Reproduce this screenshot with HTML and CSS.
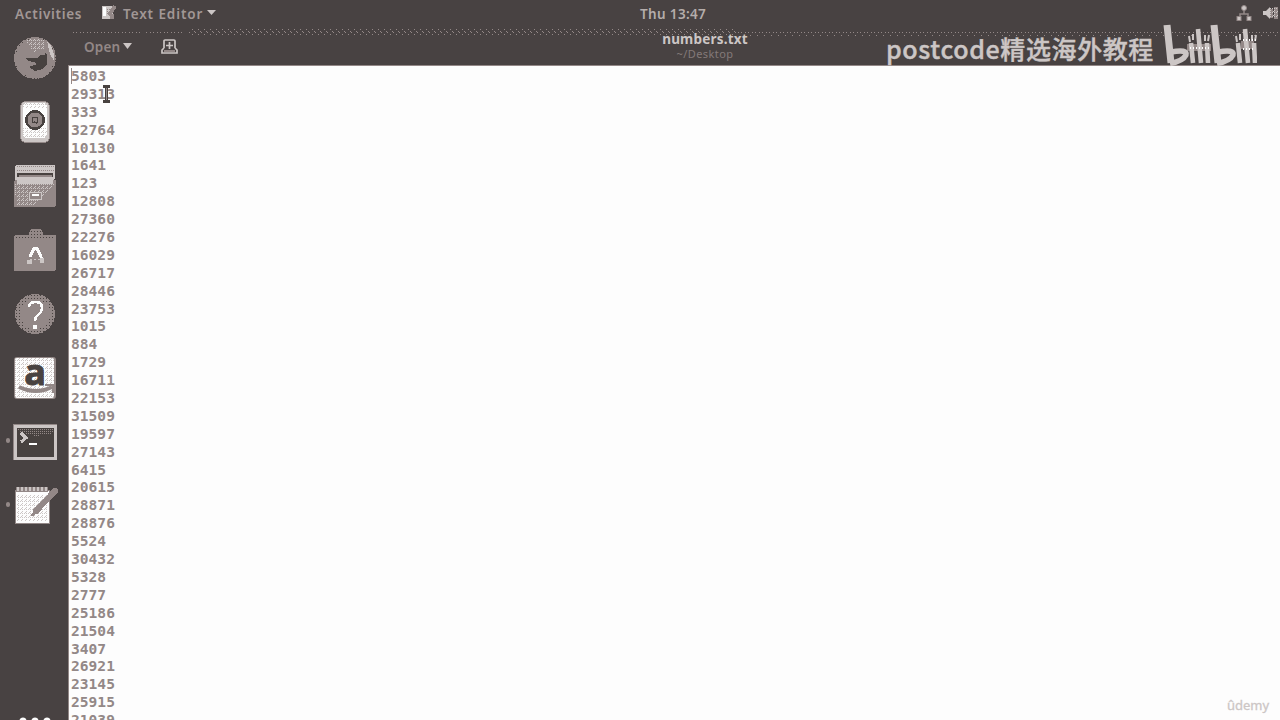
FILE: index.html
```html
<!DOCTYPE html>
<html lang="en">
<head>
<meta charset="utf-8">
<title>numbers.txt</title>
<link rel="stylesheet" href="styles.css">
</head>
<body>
<svg class="defs" width="0" height="0" aria-hidden="true">
  <defs>
    <pattern id="dk" width="3" height="3" patternUnits="userSpaceOnUse"><rect width="1" height="1" fill="#484240"/></pattern>
    <pattern id="mid" width="2" height="2" patternUnits="userSpaceOnUse"><rect width="1" height="1" fill="#938887"/></pattern>
    <pattern id="lt" width="4" height="4" patternUnits="userSpaceOnUse"><path d="M0 0h1v1h-1zM2 2h1v1h-1zM2 0h1v1h-1zM1 3h1v1h-1z" fill="#ccc6c5"/></pattern>
    <pattern id="grain" width="6" height="5" patternUnits="userSpaceOnUse"><path d="M0 0h1v1h-1zM3 2h1v1h-1zM5 4h1v1h-1z" fill="#938887"/></pattern>
    <pattern id="dots" width="7" height="5" patternUnits="userSpaceOnUse"><path d="M0 0h1v1h-1zM4 0h1v1h-1zM2 3h1v1h-1z" fill="#938887"/></pattern>
  </defs>
</svg>
<div class="screen">
  <header class="topbar">
    <span class="activities">Activities</span>
    <svg class="appicon" width="16" height="16" shape-rendering="crispEdges"><path d="M1 1h11v13H1z" fill="#ccc6c5"/><path d="M2 2h3v9H2z" fill="#fdfdfd"/><path d="M5 3h7v9H7z" fill="url(#mid)"/><path d="M14 1L8 10" stroke="#938887" stroke-width="4"/><path d="M9 9h4v5H9z" fill="#938887"/></svg>
    <span class="appname">Text Editor</span>
    <svg class="tri" width="9" height="6"><path d="M0 0h9L4.500 5z" fill="#ccc6c5"/></svg>
    <span class="clock">Thu 13:47</span>
    <svg class="tray" width="44" height="18"><g fill="#ccc6c5" stroke="#938887"><path d="M8 6v4M4 13v-3h8v3" fill="none" stroke-width="1.500"/><circle cx="8" cy="4" r="2.500"/><rect x="1" y="12.500" width="4" height="4"/><rect x="11" y="12.500" width="4" height="4"/></g><path d="M27 7h3l4-4v12l-4-4h-3z" fill="#ccc6c5"/><path d="M34 5h3v9h-3zM38 3h4v12h-4z" fill="#938887"/><path d="M34 4h8v10h-8z" fill="url(#lt)"/></svg>
  </header>
  <div class="main">
    <nav class="dock">
      <div class="item"><svg width="44" height="44" shape-rendering="crispEdges"><circle cx="22" cy="22" r="21" fill="#938887"/><circle cx="22" cy="22" r="20.500" fill="none" stroke="url(#dk)" stroke-width="2"/><path d="M13 5Q22 0 33 5L31 13L21 16Z" fill="url(#lt)"/><path d="M34 5Q42 13 41 25L37 18Z" fill="#ccc6c5"/><path d="M13 22h11l3-3h5l1-4 1 5v8l-4 5-8 2-6-4 8-3-3-2-6-1z" fill="#484240"/></svg></div>
      <div class="item"><svg width="44" height="44" shape-rendering="crispEdges"><rect x="7" y="1" width="30" height="42" rx="6" fill="#938887"/><rect x="8" y="2" width="28" height="40" rx="5" fill="#ccc6c5"/><rect x="10" y="3" width="24" height="35" rx="4" fill="#fdfdfd"/><path d="M10 28h24v11H10z" fill="url(#lt)"/><rect x="10" y="2" width="24" height="6" fill="url(#lt)"/><circle cx="22" cy="20" r="10" fill="#484240"/><circle cx="22" cy="20" r="7.500" fill="#938887"/><circle cx="22" cy="20" r="3" fill="#938887" stroke="#484240"/><path d="M21 21l3 3" stroke="#484240"/></svg></div>
      <div class="item"><svg width="44" height="44" shape-rendering="crispEdges"><rect x="2" y="1" width="40" height="15" rx="2" fill="#ccc6c5"/><path d="M3 1h38v2H3zM3 5h38v3H3z" fill="url(#mid)"/><rect x="4" y="9" width="36" height="6" fill="#484240"/><path d="M6 11h33v2H6z" fill="#938887"/><rect x="1" y="16" width="42" height="27" rx="2" fill="#938887"/><path d="M4 13h36v7H4z" fill="#ccc6c5"/><path d="M2 20h39L20 42H3z" fill="url(#lt)"/><path d="M16 28h12v7H16z" fill="#938887" stroke="#ccc6c5"/><path d="M19 31h7" stroke="#fdfdfd" stroke-width="2"/></svg></div>
      <div class="item"><svg width="44" height="44" shape-rendering="crispEdges"><path d="M16 7q0-6 4-6h6q4 0 4 6z" fill="#938887"/><path d="M18 3h11v4H18z" fill="url(#dk)"/><rect x="1" y="7" width="42" height="36" rx="2" fill="#938887"/><path d="M2 7h40v3H2z" fill="url(#dk)"/><path d="M17 29l4-9h3l5 11" fill="none" stroke="#fdfdfd" stroke-width="3"/><path d="M17 31h12" stroke="#ccc6c5" stroke-dasharray="2 2"/><path d="M14 32h5v4h-5zM27 30h4v5h-4z" fill="#ccc6c5"/></svg></div>
      <div class="item"><svg width="44" height="44" shape-rendering="crispEdges"><circle cx="22" cy="22" r="20" fill="#938887"/><circle cx="22" cy="22" r="17.500" fill="none" stroke="url(#dk)" stroke-width="5"/><path d="M16 15q0-5 7-5 6 0 6 6 0 4-4 7-3 2-3 6" fill="none" stroke="#fdfdfd" stroke-width="2.600"/><circle cx="22" cy="35" r="2.300" fill="#fdfdfd"/></svg></div>
      <div class="item amazon"><svg width="44" height="44"><rect x="1" y="1" width="42" height="42" rx="3" fill="#938887"/><rect x="2" y="2" width="39" height="40" rx="2" fill="#fdfdfd"/><path d="M2 2h39v40H2z" fill="url(#lt)"/><text x="22" y="28.500" text-anchor="middle" class="glyph">a</text><path d="M6 31q17 8 33 0" fill="none" stroke="#938887" stroke-width="4"/><path d="M32 29h8v8" fill="none" stroke="#938887" stroke-width="2"/></svg></div>
      <div class="item running term"><svg width="46" height="38" shape-rendering="crispEdges"><rect x="1" y="1" width="44" height="36" fill="#938887"/><rect x="3" y="3" width="40" height="32" fill="#484240" stroke="#ccc6c5" stroke-width="3"/><path d="M5 5h37v5L24 13 8 9z" fill="url(#mid)"/><path d="M9 10l5 5-5 4" fill="none" stroke="#ccc6c5" stroke-width="3"/><path d="M17 21h8" stroke="#fdfdfd" stroke-width="1.500"/></svg></div>
      <div class="item running notes"><svg width="46" height="40" shape-rendering="crispEdges"><path d="M3 5h34v33H3z" fill="#fdfdfd" stroke="#938887"/><path d="M5 9h30v27H5z" fill="url(#lt)"/><path d="M4 2h32v5H4z" fill="#938887"/><path d="M5 4h31" stroke="#ccc6c5" stroke-width="4" stroke-dasharray="2 2"/><path d="M43 6L24 26" stroke="#938887" stroke-width="6" stroke-linecap="round"/><path d="M25 24l-5 7" stroke="#938887" stroke-width="3"/></svg></div>
      <svg class="apps" width="34" height="10"><circle cx="5" cy="5" r="3.500" fill="#fdfdfd"/><circle cx="17" cy="5" r="3.500" fill="#fdfdfd"/><circle cx="29" cy="5" r="3.500" fill="#fdfdfd"/></svg>
    </nav>
    <section class="window">
      <div class="titlebar">
        <svg class="speckle" width="1210" height="9" shape-rendering="crispEdges"><path d="M2 5h70v2H2zM76 5h38v2H76z" fill="url(#dots)"/><path d="M120 2h549v7H120z" fill="url(#grain)"/><path d="M669 4h541v5H669z" fill="url(#dots)"/></svg>
        <span class="open">Open</span>
        <svg class="tri opentri" width="9" height="6"><path d="M0 0h9L4.500 6z" fill="#ccc6c5"/></svg>
        <svg class="newtab" width="18" height="16"><path d="M3 9V2q0-1 1-1h9q1 0 1 1v7M3 9l-2 2v3h15v-3l-2-2M8.500 3v7M5 6.500h7" fill="none" stroke="#ccc6c5" stroke-width="1.700"/><path d="M3 12h11" stroke="#938887" stroke-width="2"/></svg>
        <div class="title"><b>numbers.txt</b><span>~/Desktop</span></div>
      </div>
      <pre class="editor">5803
29313
333
32764
10130
1641
123
12808
27360
22276
16029
26717
28446
23753
1015
884
1729
16711
22153
31509
19597
27143
6415
20615
28871
28876
5524
30432
5328
2777
25186
21504
3407
26921
23145
25915
21039</pre>
    </section>
  </div>
  <i class="caret"></i>
  <svg class="cursor" width="9" height="18"><path d="M1 1.500h7M4.500 2v14M1 16.500h7" fill="none" stroke="#484240" stroke-width="3"/><path d="M4.500 3v12" stroke="#938887"/></svg>
  <div class="watermark"><span>postcode精选海外教程</span></div>
  <svg class="brand" width="96" height="46" viewBox="0 0 96 46" role="img" aria-label="bilibili">
    <path d="M26 21h24v7H26zM80 18h13v8H80z" fill="#938887"/>
    <g fill="none" stroke="#ccc6c5" stroke-width="7">
      <path d="M6 2l4 38M53 2l4 38"/>
      <path d="M10 29q17-3 15 3-3 6-16 8.500M57 29q17-3 15 3-3 6-16 8.500" stroke-width="5.500"/>
    </g>
    <g stroke="#ccc6c5" stroke-width="4.600"><path d="M30 20l2 20M37 6l3 34M46 20l1 20M77 20l2 20M84 6l3 34M93 20l1 20"/></g>
    <g stroke="#ccc6c5" stroke-width="2"><path d="M28 13l1 6M32 11v6M44 12v6M48 12l-1 6M75 13l1 6M79 11v6M91 12v6M95 12l-1 6"/></g>
    <path d="M29 25h20M82 17h13M82 26h12" stroke="#fdfdfd" stroke-width="2" stroke-dasharray="1 2"/>
  </svg>
  <span class="udemy">ûdemy</span>
</div>
</body>
</html>
```
FILE: styles.css
```css
body { margin: 0; }
.defs { position: absolute; }
.screen { position: relative; width: 1280px; height: 720px; overflow: hidden; display: flex; flex-direction: column; background: #484242; color: #938887; font-family: "Noto Sans", "Noto Sans CJK SC", sans-serif; }
.topbar { height: 26px; flex: none; display: flex; align-items: center; font-size: 13.5px; font-weight: 600; line-height: 26px; white-space: nowrap; color: #a19795; }
.topbar span { padding-top: 2px; }
.activities { width: 86px; margin-left: 15px; letter-spacing: .7px; }
.appicon { margin-right: 6px; }
.appname { width: 84px; letter-spacing: .9px; }
.clock { margin-left: 424px; letter-spacing: .35px; color: #b5adab; }
.tray { margin-left: auto; }
.main { flex: 1; min-height: 0; display: flex; }
.dock { width: 68px; flex: none; overflow: hidden; display: flex; flex-direction: column; }
.item { height: 64px; flex: none; box-sizing: border-box; display: flex; align-items: center; justify-content: center; padding-left: 2px; position: relative; }
.running::before { content: ""; position: absolute; left: 6px; top: 28px; width: 4px; height: 5px; border-radius: 2px; background: #938887; }
.item.amazon { padding-bottom: 1px; }
.item.notes { padding-bottom: 3px; }
.glyph { font: bold 36px/1 "Open Sans", sans-serif; fill: #484240; stroke: #484240; stroke-width: 1px; }
.apps { flex: none; margin: 178px 0 0 18px; }
.window { flex: 1; min-width: 0; display: flex; flex-direction: column; }
.titlebar { height: 40px; flex: none; box-sizing: border-box; border-bottom: 1px solid #938887; display: flex; align-items: center; position: relative; font-size: 13.5px; }
.speckle { position: absolute; left: 1px; top: 1px; }
.open { width: 39px; margin-left: 16px; font-weight: 600; letter-spacing: .2px; padding-top: 2px; }
.newtab { margin-left: 29px; margin-top: 2px; }
.title { margin-left: 480px; width: 92px; text-align: center; display: flex; flex-direction: column; line-height: 16px; padding-top: 1px; }
.title b { color: #ccc6c5; font-size: 13.5px; letter-spacing: .2px; }
.title span { font-size: 11px; letter-spacing: .4px; line-height: 14px; opacity: .8; }
.editor { flex: 1; min-height: 0; margin: 0; overflow: hidden; padding: 1px 0 0 2px; border-left: 1px solid #938887; background: #fdfdfd; font: bold 14.6px/17.89px "DejaVu Sans Mono", monospace; color: #938887; }
.caret { position: absolute; left: 71px; top: 68px; width: 1px; height: 16px; background: #938887; }
.cursor { position: absolute; left: 102px; top: 85px; }
.watermark { position: absolute; left: 886px; top: 31px; font-family: "Noto Sans CJK SC", sans-serif; font-size: 25px; line-height: 34px; font-weight: 500; letter-spacing: .6px; -webkit-text-stroke: .4px #ccc6c5; white-space: nowrap; color: #ccc6c5; }
.brand { position: absolute; left: 1161px; top: 23px; }
.udemy { position: absolute; left: 1227px; top: 697px; font-size: 13px; line-height: 17px; color: #ccc6c5; -webkit-text-stroke: .3px #ccc6c5; }
```
